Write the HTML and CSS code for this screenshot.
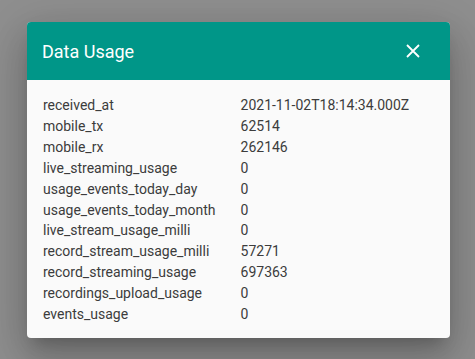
FILE: index.html
```html
<!DOCTYPE html>
<html lang="en">
<head>
    <meta charset="UTF-8">
    <title>Data Usage</title>
    <link rel="stylesheet" href="styles.css">
</head>
<body>
    <div class="overlay">
        <div class="dialog">
            <div class="dialog-header">
                <span class="dialog-title">Data Usage</span>
                <button class="close-btn" aria-label="Close">
                    <svg width="14" height="14" viewBox="0 0 14 14">
                        <path d="M1 1 L13 13 M13 1 L1 13" stroke="#fff" stroke-width="1.8" fill="none"/>
                    </svg>
                </button>
            </div>
            <div class="dialog-body">
                <div class="usage-table">
                    <span>received_at</span><span>2021-11-02T18:14:34.000Z</span>
                    <span>mobile_tx</span><span>62514</span>
                    <span>mobile_rx</span><span>262146</span>
                    <span>live_streaming_usage</span><span>0</span>
                    <span>usage_events_today_day</span><span>0</span>
                    <span>usage_events_today_month</span><span>0</span>
                    <span>live_stream_usage_milli</span><span>0</span>
                    <span>record_stream_usage_milli</span><span>57271</span>
                    <span>record_streaming_usage</span><span>697363</span>
                    <span>recordings_upload_usage</span><span>0</span>
                    <span>events_usage</span><span>0</span>
                </div>
            </div>
        </div>
    </div>
</body>
</html>
```

FILE: styles.css
```css
body {
    margin: 0;
    background: #8f8f8f;
    font-family: Roboto, 'Noto Sans', sans-serif;
}

.overlay {
    padding: 22px 25px 21px 27px;
}

.dialog {
    width: 423px;
    background: #fafafa;
    border-radius: 4px;
    overflow: hidden;
    box-shadow: 0 11px 15px -7px rgba(0,0,0,0.2),
                0 24px 38px 3px rgba(0,0,0,0.14),
                0 9px 46px 8px rgba(0,0,0,0.12);
}

.dialog-header {
    height: 58px;
    background: #009688;
    color: #fff;
    display: flex;
    align-items: center;
    justify-content: space-between;
    padding: 0 30px 0 15px;
}

.dialog-title {
    font-size: 18px;
    font-weight: 400;
}

.close-btn {
    background: none;
    border: none;
    padding: 0;
    display: flex;
    cursor: pointer;
}

.dialog-body {
    padding: 15px 16px 13px 16px;
}

.usage-table {
    display: grid;
    grid-template-columns: auto 1fr;
    column-gap: 25px;
    font-size: 14px;
    line-height: 20.9px;
    color: #3c3c3c;
}
```
